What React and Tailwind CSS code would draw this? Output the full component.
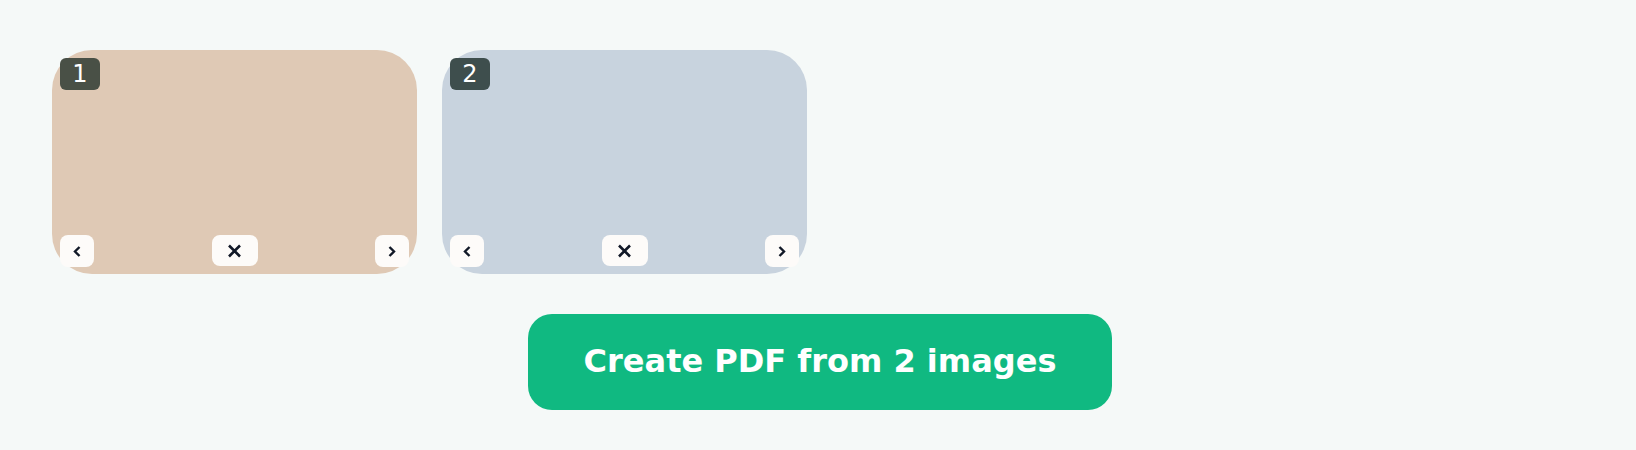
import React from "react";

function XIcon() {
  return (
    <svg width="15" height="14" viewBox="0 0 15 14" fill="none">
      <path d="M2 1.5 L13 12.5 M13 1.5 L2 12.5" stroke="#111827" strokeWidth="2.6" />
    </svg>
  );
}

function Chevron({ dir }) {
  return (
    <svg width="8" height="11" viewBox="0 0 8 11" fill="none">
      <path
        d={dir === "left" ? "M6.5 1 L2 5.5 L6.5 10" : "M1.5 1 L6 5.5 L1.5 10"}
        stroke="#111827"
        strokeWidth="2.4"
      />
    </svg>
  );
}

function Card({ n, bg, badge }) {
  return (
    <div className={`relative w-[365px] h-[224px] rounded-[40px] ${bg}`}>
      <div
        className={`absolute top-2 left-2 w-10 h-8 rounded-md ${badge} text-white text-[24px] leading-none flex items-center justify-center`}
        style={{ fontFamily: '"DejaVu Sans", sans-serif' }}
      >
        {n}
      </div>
      <div className="absolute bottom-[7px] left-2 right-2 flex items-end justify-between">
        <button className="w-[34px] h-8 rounded-lg bg-[#fdfbf9] flex items-center justify-center">
          <Chevron dir="left" />
        </button>
        <button className="w-[46px] h-[31px] rounded-lg bg-[#fdfbf9] flex items-center justify-center mb-px">
          <XIcon />
        </button>
        <button className="w-[34px] h-8 rounded-lg bg-[#fdfbf9] flex items-center justify-center">
          <Chevron dir="right" />
        </button>
      </div>
    </div>
  );
}

export default function App() {
  return (
    <div className="min-h-[450px] bg-[#f5f9f8] pt-[50px] pl-[52px] pr-[48px] flex flex-col">
      <div className="flex gap-[25px]">
        <Card n="1" bg="bg-[#dfc9b5]" badge="bg-[#495046]" />
        <Card n="2" bg="bg-[#c8d3de]" badge="bg-[#3e4e4d]" />
      </div>
      <div className="mt-[40px] flex justify-center">
        <button
          className="w-[584px] h-[96px] rounded-[24px] bg-[#10b981] text-white font-bold text-[32px] pb-[3px] flex items-center justify-center"
          style={{ fontFamily: '"DejaVu Sans", sans-serif' }}
        >
          Create PDF from 2 images
        </button>
      </div>
    </div>
  );
}
